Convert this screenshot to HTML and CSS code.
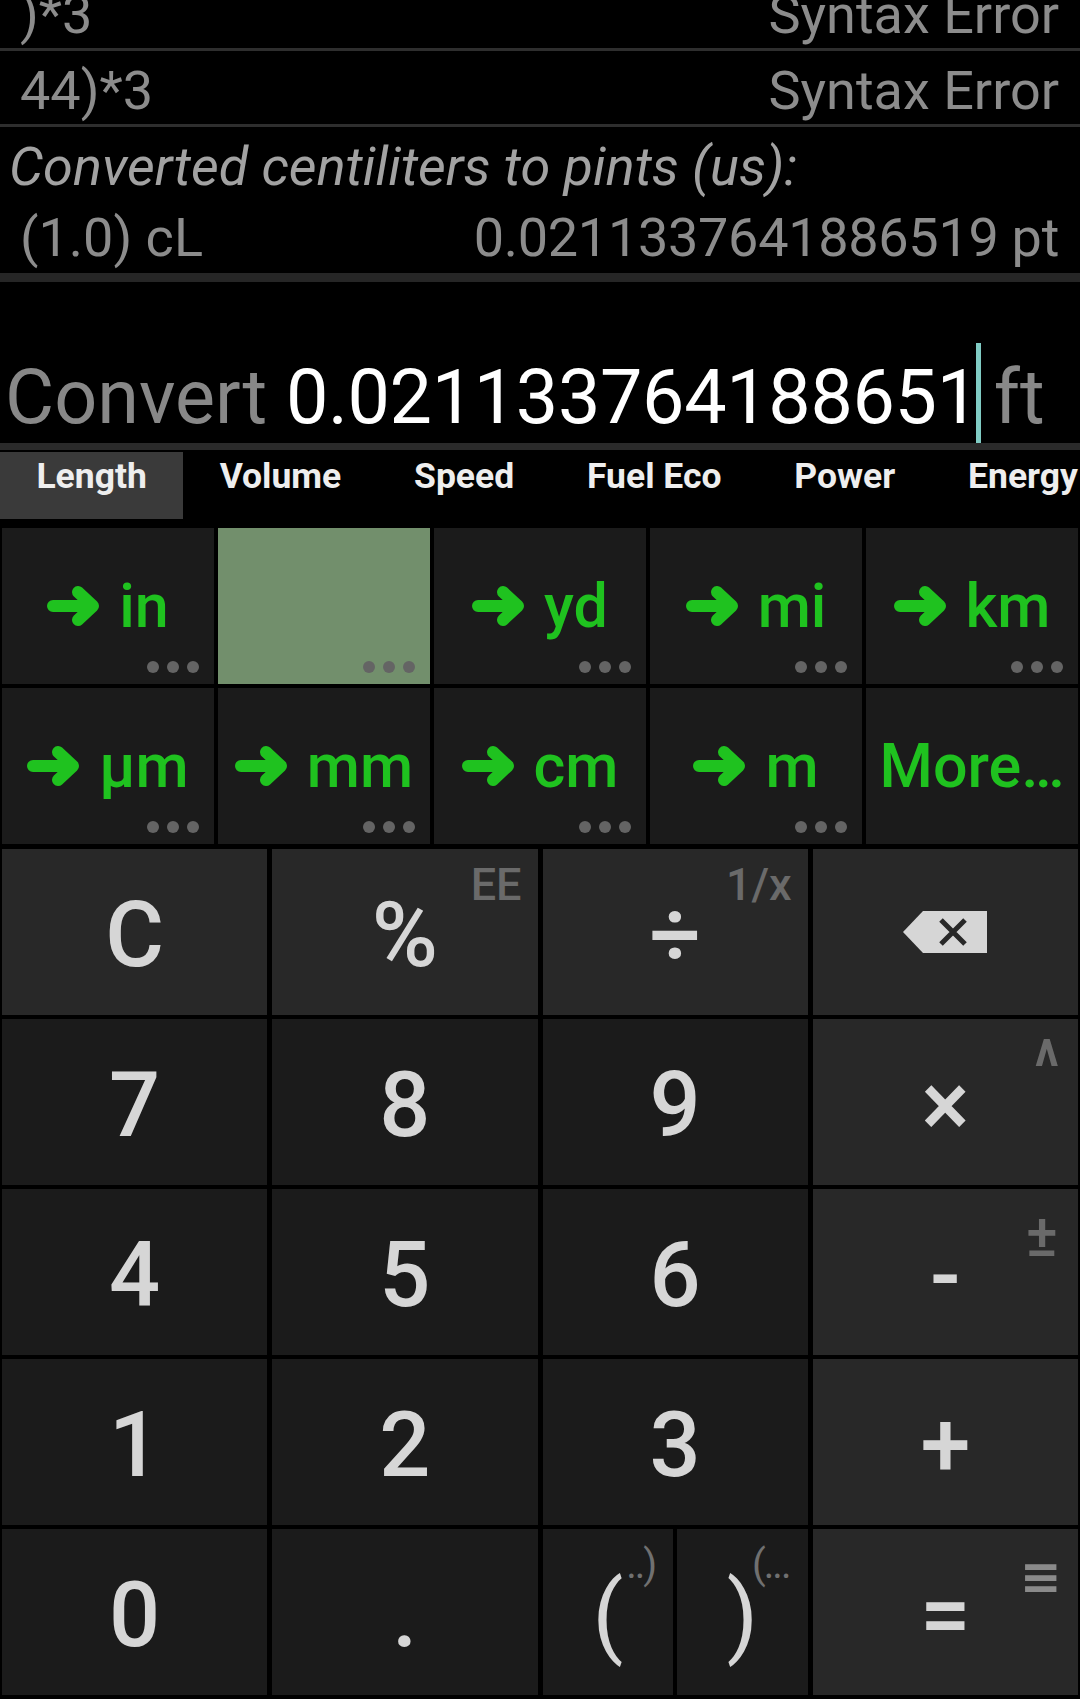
FILE: index.html
```html
<!DOCTYPE html>
<html lang="en">
<head>
<meta charset="utf-8">
<title>Calculator</title>
<link rel="stylesheet" href="styles.css">
</head>
<body>
<div class="history">
  <div class="hrow"><span>)*3</span><span>Syntax Error</span></div>
  <div class="hrow"><span>44)*3</span><span>Syntax Error</span></div>
  <div class="conv">
    <div class="conv-title">Converted centiliters to pints (us):</div>
    <div class="conv-row"><span>(1.0) cL</span><span>0.0211337641886519 pt</span></div>
  </div>
</div>
<div class="divider"></div>
<div class="input">
  <div class="input-line"><span class="label">Convert </span><span class="num">0.021133764188651</span><span class="cursor"></span><span class="unit">ft</span></div>
</div>
<div class="band"></div>
<div class="tabs">
  <div class="tab active">Length</div>
  <div class="tab">Volume</div>
  <div class="tab">Speed</div>
  <div class="tab">Fuel Eco</div>
  <div class="tab">Power</div>
  <div class="tab">Energy</div>
</div>
<div class="units">
  <div class="ubtn"><svg class="arr" viewBox="0 0 54 40"><path d="M6 20 H44 M31 6 L46 20 L31 34"/></svg><span>in</span><div class="dots"><i></i><i></i><i></i></div></div>
  <div class="ubtn sel"><div class="dots"><i></i><i></i><i></i></div></div>
  <div class="ubtn"><svg class="arr" viewBox="0 0 54 40"><path d="M6 20 H44 M31 6 L46 20 L31 34"/></svg><span>yd</span><div class="dots"><i></i><i></i><i></i></div></div>
  <div class="ubtn"><svg class="arr" viewBox="0 0 54 40"><path d="M6 20 H44 M31 6 L46 20 L31 34"/></svg><span>mi</span><div class="dots"><i></i><i></i><i></i></div></div>
  <div class="ubtn"><svg class="arr" viewBox="0 0 54 40"><path d="M6 20 H44 M31 6 L46 20 L31 34"/></svg><span>km</span><div class="dots"><i></i><i></i><i></i></div></div>
  <div class="ubtn"><svg class="arr" viewBox="0 0 54 40"><path d="M6 20 H44 M31 6 L46 20 L31 34"/></svg><span>µm</span><div class="dots"><i></i><i></i><i></i></div></div>
  <div class="ubtn"><svg class="arr" viewBox="0 0 54 40"><path d="M6 20 H44 M31 6 L46 20 L31 34"/></svg><span>mm</span><div class="dots"><i></i><i></i><i></i></div></div>
  <div class="ubtn"><svg class="arr" viewBox="0 0 54 40"><path d="M6 20 H44 M31 6 L46 20 L31 34"/></svg><span>cm</span><div class="dots"><i></i><i></i><i></i></div></div>
  <div class="ubtn"><svg class="arr" viewBox="0 0 54 40"><path d="M6 20 H44 M31 6 L46 20 L31 34"/></svg><span>m</span><div class="dots"><i></i><i></i><i></i></div></div>
  <div class="ubtn"><span>More…</span></div>
</div>
<div class="keypad">
  <div class="key op">C</div>
  <div class="key op">%<span class="sup">EE</span></div>
  <div class="key op">÷<span class="sup">1/x</span></div>
  <div class="key op"><svg class="bs" viewBox="0 0 84 42"><path class="bs-body" d="M0 21 L20 0 H84 V42 H20 Z"/><path class="bs-x" d="M38 9 L62 33 M62 9 L38 33"/></svg></div>

  <div class="key">7</div>
  <div class="key">8</div>
  <div class="key">9</div>
  <div class="key op">×<span class="sup sup-caret">^</span></div>

  <div class="key">4</div>
  <div class="key">5</div>
  <div class="key">6</div>
  <div class="key op">-<span class="sup sup-pm">±</span></div>

  <div class="key">1</div>
  <div class="key">2</div>
  <div class="key">3</div>
  <div class="key op">+</div>

  <div class="key">0</div>
  <div class="key">.</div>
  <div class="pkeys">
    <div class="key"><span class="g">(<span class="psup psup-l">..)</span></span></div>
    <div class="key"><span class="g">)<span class="psup psup-r">(...</span></span></div>
  </div>
  <div class="key op">=<span class="sup sup-eq">≡</span></div>
</div>
</body>
</html>
```

FILE: styles.css
```css
* {
  box-sizing: border-box;
  margin: 0;
  padding: 0;
}

html,
body {
  background: #000;
}

body {
  width: 1080px;
  height: 1699px;
  overflow: hidden;
  font-family: Roboto, "Liberation Sans", sans-serif;
  color: #8c8c8c;
}

/* ---------- history ---------- */
.history {
  height: 273px;
  overflow: hidden;
  display: flex;
  flex-direction: column;
  justify-content: flex-end;
}

.hrow {
  flex-shrink: 0;
  display: flex;
  justify-content: space-between;
  padding: 6px 21px 0 20px;
  font-size: 54px;
  line-height: 67px;
  white-space: nowrap;
  border-bottom: 3px solid #2e2e2e;
}

.conv {
  flex-shrink: 0;
  padding-top: 3px;
  font-size: 54px;
  white-space: nowrap;
}

.conv-title {
  font-style: italic;
  color: #a2a2a2;
  line-height: 73px;
  padding-left: 9px;
}

.conv-row {
  display: flex;
  justify-content: space-between;
  line-height: 70px;
  padding: 0 21px 0 20px;
}

.conv-row span:last-child {
  letter-spacing: -0.3px;
}

.divider {
  height: 9px;
  background: #262626;
}

/* ---------- input ---------- */
.input {
  height: 161px;
  display: flex;
  align-items: flex-end;
  padding-left: 5px;
  font-size: 75.5px;
  white-space: nowrap;
}

.input-line {
  line-height: normal;
}

.label {
  color: #888;
}

.num {
  color: #fff;
  letter-spacing: -0.35px;
}

.cursor {
  display: inline-block;
  width: 5px;
  height: 100px;
  margin-left: -3px;
  background: #80cbc4;
  vertical-align: -20px;
}

.unit {
  color: #888;
  padding-left: 13px;
}

.band {
  height: 7px;
  background: #2a2a2a;
}

/* ---------- tabs ---------- */
.tabs {
  height: 70px;
  display: flex;
  overflow: hidden;
  white-space: nowrap;
}

.tab {
  flex-shrink: 0;
  height: 67px;
  margin-top: 2px;
  padding: 7px 36.4px 0;
  font-size: 35.5px;
  line-height: 35px;
  font-weight: 700;
  color: #eeeeee;
}

.tab.active {
  background: #3a3a3a;
}

/* ---------- unit buttons ---------- */
.units {
  display: grid;
  grid-template-columns: repeat(5, 212px);
  grid-template-rows: 156px 156px;
  gap: 4px;
  padding: 8px 2px 0;
}

.ubtn {
  position: relative;
  display: flex;
  align-items: center;
  justify-content: center;
  gap: 18px;
  background: #1b1b1b;
  color: #1fc21f;
  font-size: 61px;
  font-weight: 500;
  line-height: 1;
  white-space: nowrap;
}

.ubtn.sel {
  background: #728f6c;
}

.arr {
  width: 54px;
  height: 40px;
  flex-shrink: 0;
}

.arr path {
  fill: none;
  stroke: #1fc21f;
  stroke-width: 12;
  stroke-linecap: round;
  stroke-linejoin: round;
}

.dots {
  position: absolute;
  right: 15px;
  bottom: 11px;
  display: flex;
  gap: 8px;
}

.dots i {
  display: block;
  width: 12px;
  height: 12px;
  border-radius: 50%;
  background: #646464;
}

/* ---------- keypad ---------- */
.keypad {
  margin-top: 5px;
  display: grid;
  grid-template-columns: repeat(4, 1fr);
  grid-template-rows: repeat(5, 166px);
  gap: 4px 5px;
  padding: 0 2px;
}

.key {
  position: relative;
  display: flex;
  align-items: center;
  justify-content: center;
  padding-top: 8px;
  background: #1b1b1b;
  color: #d6d6d6;
  font-size: 90px;
  line-height: 90px;
  font-weight: 500;
}

.key.op {
  background: #282828;
}

.sup {
  position: absolute;
  top: 13px;
  right: 16px;
  font-size: 45px;
  line-height: 45px;
  font-weight: 500;
  color: #6a6a6a;
}

.sup-caret {
  top: 19px;
  right: 19px;
  font-size: 56px;
  font-weight: 700;
  transform: scaleY(1.35);
  transform-origin: top;
}

.sup-pm {
  top: 17px;
  right: 20px;
  font-size: 60px;
  line-height: 60px;
}

.sup-eq {
  top: 23px;
  right: 16px;
  color: #8a8a8a;
  font-family: "DejaVu Sans", sans-serif;
  font-size: 50px;
  line-height: 50px;
  font-weight: 700;
}

.bs {
  width: 84px;
  height: 42px;
  margin-top: -8px;
}

.bs-body {
  fill: #d6d6d6;
}

.bs-x {
  fill: none;
  stroke: #282828;
  stroke-width: 5;
}

.pkeys {
  display: grid;
  grid-template-columns: 1fr 1fr;
  gap: 4px;
}

.g {
  position: relative;
  font-weight: 400;
}

.psup {
  position: absolute;
  top: -26px;
  font-size: 40px;
  line-height: 40px;
  letter-spacing: -2px;
  color: #707070;
  white-space: nowrap;
}

.psup-l {
  left: calc(100% + 3px);
}

.psup-r {
  left: calc(100% - 6px);
}
```
